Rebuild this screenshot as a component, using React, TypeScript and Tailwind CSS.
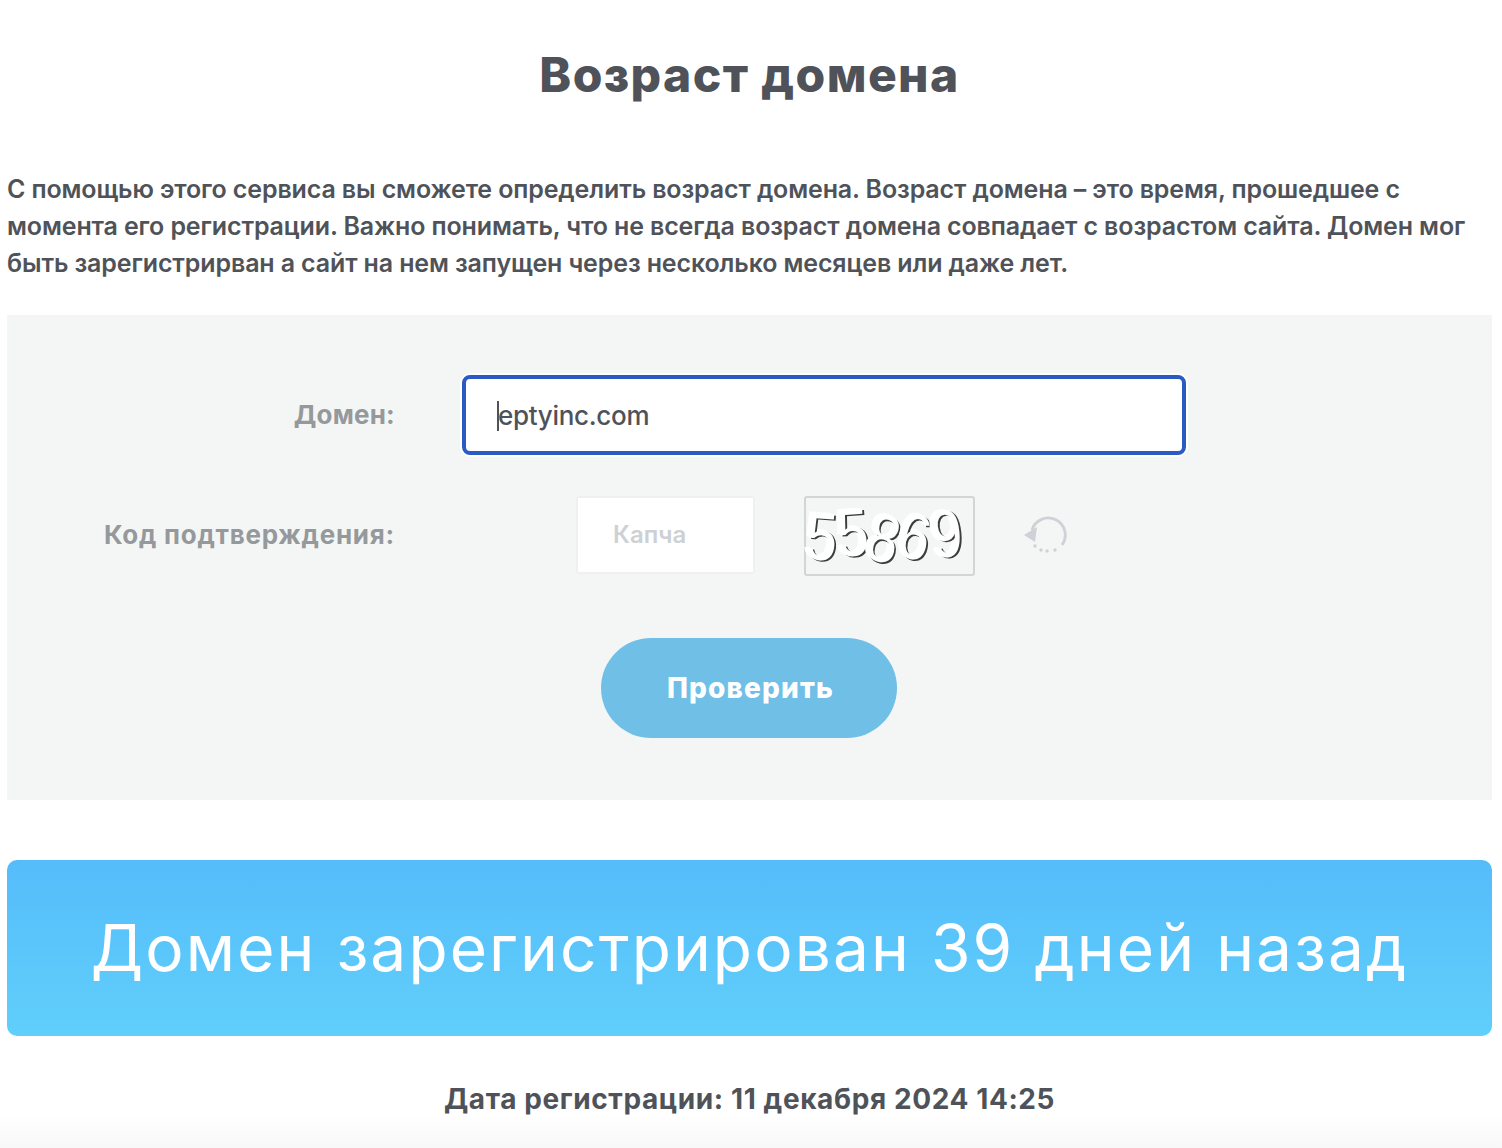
const digits = [
  { ch: '5', cls: 'rotate-[4deg] scale-y-[1.2] translate-y-[1px]' },
  { ch: '5', cls: '-rotate-[4deg] scale-y-[1.2] -translate-y-[3px]' },
  { ch: '8', cls: 'rotate-[14deg] scale-y-[1.2] translate-y-[3px]' },
  { ch: '6', cls: 'rotate-[12deg] scale-y-[1.15] translate-y-[1px]' },
  { ch: '9', cls: '-rotate-[6deg] scale-y-[1.2] -translate-y-[2px]' },
]

function Captcha() {
  return (
    <div className="flex h-[80px] w-[171px] items-center rounded-[3px] border-2 border-[#d3d5d5] bg-[#f4f6f6]">
      {digits.map((d, i) => (
        <span
          key={i}
          className={`inline-block font-['Liberation_Sans',sans-serif] text-[56px] leading-none text-white [text-shadow:2px_1px_0_#3a3c3e,-3px_-1px_0_#ffffff] ${d.cls}`}
        >
          {d.ch}
        </span>
      ))}
    </div>
  )
}

function RefreshIcon() {
  return (
    <svg width="44" height="44" viewBox="0 0 44 44" fill="none" className="ml-[49px]">
      <path d="M8 16 A17 17 0 1 1 38 31" stroke="#ced1d6" strokeWidth="2.8" />
      <path d="M0 21 L13 13 L11 28 Z" fill="#ced1d6" />
      <circle cx="11" cy="32" r="1.7" fill="#ced1d6" />
      <circle cx="17" cy="36" r="1.7" fill="#ced1d6" />
      <circle cx="23" cy="37" r="1.7" fill="#ced1d6" />
      <circle cx="31" cy="36" r="1.7" fill="#ced1d6" />
    </svg>
  )
}

export default function App() {
  return (
    <div className="min-h-[1148px] bg-[linear-gradient(to_bottom,#ffffff_1115px,#f8f8f8_1148px)] pl-[7px] pr-[10px] font-['Inter',sans-serif] text-[#4f5359]">
      <h1 className="pt-[44px] text-center text-[48px] font-extrabold leading-[62px] tracking-[1.4px]">Возраст домена</h1>

      <p className="mt-[65px] text-[25px] font-semibold leading-[37px] tracking-[-0.13px]">
        С помощью этого сервиса вы сможете определить возраст домена. Возраст домена – это время, прошедшее с момента его регистрации. Важно понимать, что не всегда возраст домена совпадает с возрастом сайта. Домен мог быть зарегистрирван а сайт на нем запущен через несколько месяцев или даже лет.
      </p>

      <form className="mt-[33px] h-[485px] bg-[#f4f6f6] pt-[60px]">
        <div className="flex items-center">
          <label className="w-[389px] pb-[2px] pr-[1px] text-right text-[26px] font-bold tracking-[0.2px] text-[#96999b]">Домен:</label>
          <div className="relative ml-[66px] flex h-[80px] w-[724px] items-center rounded-[8px] border-[4px] border-[#2a5bc4] bg-white pl-[32px] text-[26px] font-[450] tracking-[-0.3px] shadow-[0_0_0_2px_#fff]">
            <span className="absolute left-[31px] top-[22px] h-[30px] w-[2px] bg-[#4f5359]" />
            eptyinc.com
          </div>
        </div>

        <div className="mt-[41px] flex items-center">
          <label className="w-[389px] pb-[3px] pr-[1px] text-right text-[26px] font-bold tracking-[0.75px] text-[#96999b]">Код подтверждения:</label>
          <div className="mb-[2px] ml-[180px] flex h-[78px] w-[179px] items-center rounded-[3px] border-2 border-[#eff1f1] bg-white pl-[35px] text-[24px] font-semibold text-[#cdd0d5]">
            Капча
          </div>
          <div className="ml-[49px]"><Captcha /></div>
          <RefreshIcon />
        </div>

        <div className="mt-[62px] flex justify-center">
          <button type="button" className="-ml-[2px] h-[100px] w-[296px] rounded-full bg-[#70bfe7] pl-[4px] text-[28px] font-extrabold tracking-[1.15px] text-white">
            Проверить
          </button>
        </div>
      </form>

      <div className="mt-[60px] flex h-[176px] items-center justify-center rounded-[10px] bg-gradient-to-b from-[#55bcfa] to-[#60cffb] text-[64px] font-normal tracking-[2.1px] text-white">
        Домен зарегистрирован 39 дней назад
      </div>

      <div className="mt-[44px] text-center text-[28px] font-bold leading-[38px] tracking-[0.6px]">
        Дата регистрации: 11 декабря 2024 14:25
      </div>
    </div>
  )
}
